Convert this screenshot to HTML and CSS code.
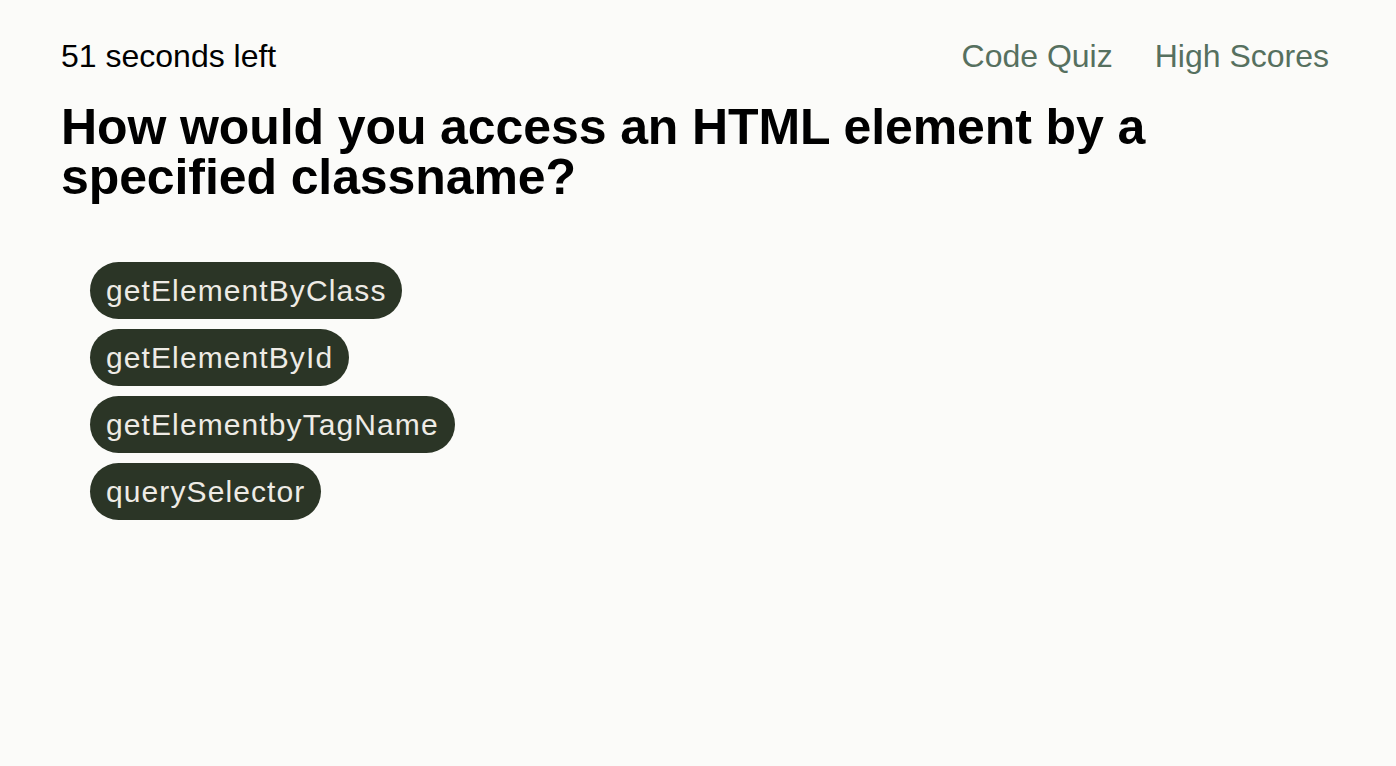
FILE: index.html
```html
<!DOCTYPE html>
<html lang="en">
<head>
<meta charset="utf-8">
<title>Code Quiz</title>
<link rel="stylesheet" href="styles.css">
</head>
<body>
<div class="page">
  <header class="topbar">
    <div class="timer">51 seconds left</div>
    <nav class="nav">
      <a class="nav-link" href="#">Code Quiz</a>
      <a class="nav-link" href="#">High Scores</a>
    </nav>
  </header>
  <main class="quiz">
    <h1 class="question">How would you access an HTML element by a specified classname?</h1>
    <div class="answers">
      <button class="answer">getElementByClass</button>
      <button class="answer">getElementById</button>
      <button class="answer">getElementbyTagName</button>
      <button class="answer">querySelector</button>
    </div>
  </main>
</div>
</body>
</html>
```

FILE: styles.css
```css
html, body {
  margin: 0;
  padding: 0;
  background: #fbfbf9;
}

body {
  font-family: "Liberation Sans", Arial, Helvetica, sans-serif;
  color: #000;
}

.page {
  padding: 38px 67px 0 61px;
}

.topbar {
  display: flex;
  justify-content: space-between;
  align-items: flex-start;
}

.timer {
  font-size: 32px;
  line-height: 37px;
}

.nav {
  display: flex;
  gap: 42px;
}

.nav-link {
  font-size: 32px;
  line-height: 37px;
  color: #56705f;
  text-decoration: none;
}

.question {
  margin: 27px 0 0 0;
  font-size: 50px;
  line-height: 50px;
  font-weight: bold;
  letter-spacing: -0.1px;
}

.answers {
  margin-top: 60px;
  padding-left: 29px;
  display: flex;
  flex-direction: column;
  align-items: flex-start;
  gap: 10px;
}

.answer {
  font-family: "Liberation Sans", Arial, Helvetica, sans-serif;
  font-size: 30px;
  letter-spacing: 1.1px;
  line-height: 37px;
  padding: 10px 16px 10px 16px;
  border: none;
  border-radius: 29px;
  background: #2b3526;
  color: #eeebe5;
  cursor: pointer;
}
```
